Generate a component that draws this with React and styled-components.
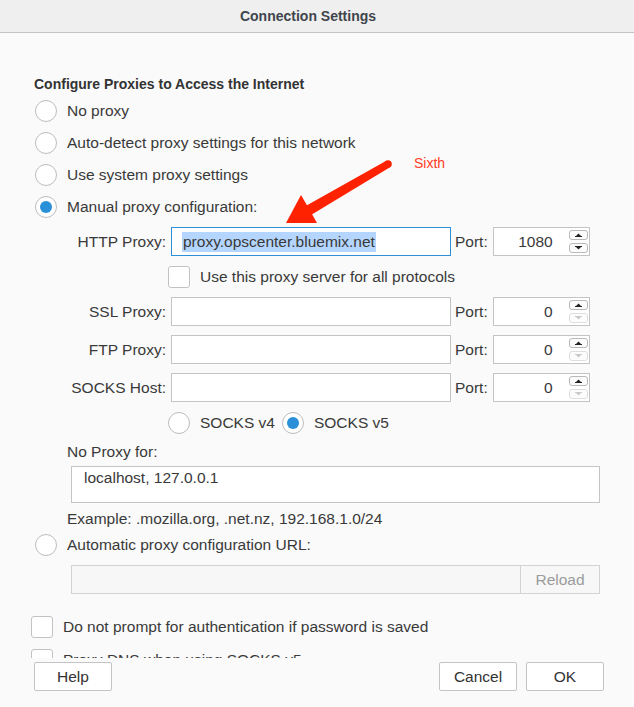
import React from "react";
import styled, { createGlobalStyle } from "styled-components";

const GlobalStyle = createGlobalStyle`
  body {
    margin: 0;
    background: #fafafa;
    font-family: "Liberation Sans", Arial, sans-serif;
    color: #393939;
  }
`;

const Window = styled.div`
  position: relative;
  width: 634px;
  height: 707px;
  display: flex;
  flex-direction: column;
  overflow: hidden;
  background: #fafafa;
`;

const TitleBar = styled.div`
  flex: none;
  height: 33px;
  box-sizing: border-box;
  display: flex;
  align-items: center;
  justify-content: center;
  padding-right: 18px;
  background: #efefef;
  border-bottom: 1px solid #c3c3c3;
  font-size: 14px;
  font-weight: bold;
  color: #3f454d;
`;

const Content = styled.div`
  flex: 1;
  min-height: 0;
  overflow: hidden;
  box-sizing: border-box;
  padding: 41px 0 0 35px;
  font-size: 15.5px;
`;

const Heading = styled.div`
  margin-left: -1px;
  margin-bottom: 1px;
  line-height: 20px;
  font-size: 14px;
  font-weight: bold;
  color: #333;
`;

const OptionRow = styled.div`
  display: flex;
  align-items: center;
  gap: 10px;
  height: ${(p) => p.$h || 32}px;
  margin-top: ${(p) => p.$mt || 0}px;
  margin-left: ${(p) => p.$ml || 0}px;
  white-space: nowrap;
`;

const Radio = styled.span`
  flex: none;
  width: 22px;
  height: 22px;
  box-sizing: border-box;
  border: 1px solid #bdbdbd;
  border-radius: 50%;
  background: #fff;
  display: flex;
  align-items: center;
  justify-content: center;
  &::after {
    content: "";
    display: ${(p) => (p.$checked ? "block" : "none")};
    width: 12px;
    height: 12px;
    border-radius: 50%;
    background: #2a90d9;
  }
`;

const Checkbox = styled.span`
  flex: none;
  width: 22px;
  height: 22px;
  box-sizing: border-box;
  border: 1px solid #c2c2c2;
  border-radius: 3px;
  background: #fff;
`;

const FieldRow = styled.div`
  display: grid;
  grid-template-columns: 132px 280px max-content 97px;
  justify-content: start;
  column-gap: 4px;
  align-items: center;
  height: 29px;
  margin-top: ${(p) => p.$mt || 0}px;
`;

const FieldLabel = styled.label`
  text-align: right;
  padding-right: 1px;
  white-space: nowrap;
`;

const TextBox = styled.div`
  height: 29px;
  box-sizing: border-box;
  border: 1px solid ${(p) => (p.$focused ? "#2f8fd6" : "#c4c4c4")};
  background: #fff;
  display: flex;
  align-items: center;
  padding-left: 11px;
  white-space: nowrap;
`;

const Selected = styled.span`
  background: #b4d5fd;
  line-height: 20px;
  padding: 0 1px;
  margin-left: -1px;
`;

const PortBox = styled.div`
  height: 29px;
  box-sizing: border-box;
  border: 1px solid #c4c4c4;
  background: #fff;
  display: flex;
  align-items: center;
  justify-content: flex-end;
  padding-right: 1px;
`;

const PortValue = styled.span`
  margin-right: 16px;
`;

const Spinner = styled.div`
  display: flex;
  flex-direction: column;
  gap: 3px;
`;

const SpinButton = styled.span`
  width: 19px;
  height: 10px;
  box-sizing: border-box;
  border: 1px solid ${(p) => (p.$disabled ? "#dedede" : "#b9b9b9")};
  border-radius: 3px;
  background: #fcfcfc;
  display: flex;
  align-items: center;
  justify-content: center;
  color: ${(p) => (p.$disabled ? "#c9c9c9" : "#222")};
`;

const CheckRow = styled.div`
  grid-column: 2 / 5;
  display: flex;
  align-items: center;
  gap: 10px;
  margin-left: -3px;
  white-space: nowrap;
`;

const SocksRow = styled.div`
  display: flex;
  align-items: center;
  height: 29px;
  margin: 6px 0 0 133px;
`;

const SocksOption = styled.div`
  display: flex;
  align-items: center;
  gap: 10px;
  margin-right: 7px;
  white-space: nowrap;
`;

const Section = styled.div`
  margin-left: 32px;
`;

const TextLine = styled.div`
  line-height: 20px;
  margin-top: ${(p) => p.$mt || 0}px;
  white-space: nowrap;
`;

const TextArea = styled.div`
  width: 529px;
  height: 37px;
  box-sizing: border-box;
  margin: 4px 0 0 4px;
  border: 1px solid #c4c4c4;
  background: #fff;
  padding: 1px 0 0 12px;
  line-height: 20px;
`;

const UrlBox = styled.div`
  display: flex;
  width: 529px;
  height: 29px;
  box-sizing: border-box;
  margin: 4px 0 0 36px;
  border: 1px solid #d3d3d3;
  background: #f7f7f7;
`;

const UrlInput = styled.div`
  flex: 1;
  border-right: 1px solid #d3d3d3;
`;

const ReloadButton = styled.div`
  width: 78px;
  display: flex;
  align-items: center;
  justify-content: center;
  color: #9b9b9b;
`;

const Footer = styled.div`
  flex: none;
  height: 49px;
  box-sizing: border-box;
  padding: 4px 30px 0 34px;
  display: flex;
  align-items: flex-start;
  gap: 9px;
  background: #fafafa;
`;

const Button = styled.button`
  width: 78px;
  height: 29px;
  box-sizing: border-box;
  border: 1px solid #c4c4c4;
  border-radius: 2px;
  background: #fff;
  font-family: inherit;
  font-size: 15.5px;
  color: #333;
  padding: 0;
  &:first-child {
    margin-right: auto;
  }
`;

const Annotation = styled.svg`
  position: absolute;
  left: 0;
  top: 0;
  width: 634px;
  height: 707px;
  pointer-events: none;
`;

const Note = styled.span`
  position: absolute;
  left: 414px;
  top: 154px;
  font-size: 14px;
  line-height: 18px;
  color: #ff3d24;
`;

function Spin({ downDisabled }) {
  return (
    <Spinner>
      <SpinButton>
        <svg width="9" height="6" viewBox="0 0 9 6">
          <polygon points="2,4 4.5,1.5 7,4" fill="currentColor" />
          <line x1="1" y1="4.5" x2="8" y2="4.5" stroke="currentColor" strokeWidth="1" />
        </svg>
      </SpinButton>
      <SpinButton $disabled={downDisabled}>
        <svg width="9" height="6" viewBox="0 0 9 6">
          <line x1="1" y1="1.5" x2="8" y2="1.5" stroke="currentColor" strokeWidth="1" />
          <polygon points="2,2 4.5,4.5 7,2" fill="currentColor" />
        </svg>
      </SpinButton>
    </Spinner>
  );
}

function ProxyField({ label, value, port, focused, mt }) {
  return (
    <FieldRow $mt={mt}>
      <FieldLabel>{label}</FieldLabel>
      <TextBox $focused={focused}>{value && <Selected>{value}</Selected>}</TextBox>
      <FieldLabel>Port:</FieldLabel>
      <PortBox>
        <PortValue>{port}</PortValue>
        <Spin downDisabled={port === "0"} />
      </PortBox>
    </FieldRow>
  );
}

export default function App() {
  return (
    <Window>
      <GlobalStyle />
      <TitleBar>Connection Settings</TitleBar>
      <Content>
        <Heading>Configure Proxies to Access the Internet</Heading>
        <OptionRow>
          <Radio />
          No proxy
        </OptionRow>
        <OptionRow>
          <Radio />
          Auto-detect proxy settings for this network
        </OptionRow>
        <OptionRow>
          <Radio />
          Use system proxy settings
        </OptionRow>
        <OptionRow>
          <Radio $checked />
          Manual proxy configuration:
        </OptionRow>

        <ProxyField label="HTTP Proxy:" value="proxy.opscenter.bluemix.net" port="1080" focused mt={4} />
        <FieldRow $mt={6}>
          <CheckRow>
            <Checkbox />
            Use this proxy server for all protocols
          </CheckRow>
        </FieldRow>
        <ProxyField label="SSL Proxy:" port="0" mt={6} />
        <ProxyField label="FTP Proxy:" port="0" mt={9} />
        <ProxyField label="SOCKS Host:" port="0" mt={9} />

        <SocksRow>
          <SocksOption>
            <Radio />
            SOCKS v4
          </SocksOption>
          <SocksOption>
            <Radio $checked />
            SOCKS v5
          </SocksOption>
        </SocksRow>

        <Section>
          <TextLine $mt={5}>No Proxy for:</TextLine>
          <TextArea>localhost, 127.0.0.1</TextArea>
          <TextLine $mt={6}>Example: .mozilla.org, .net.nz, 192.168.1.0/24</TextLine>
        </Section>

        <OptionRow>
          <Radio />
          Automatic proxy configuration URL:
        </OptionRow>
        <UrlBox>
          <UrlInput />
          <ReloadButton>Reload</ReloadButton>
        </UrlBox>

        <OptionRow $h={29} $mt={18} $ml={-4}>
          <Checkbox />
          Do not prompt for authentication if password is saved
        </OptionRow>
        <OptionRow $h={29} $mt={4} $ml={-4}>
          <Checkbox />
          Proxy DNS when using SOCKS v5
        </OptionRow>
      </Content>
      <Footer>
        <Button>Help</Button>
        <Button>Cancel</Button>
        <Button>OK</Button>
      </Footer>

      <Annotation viewBox="0 0 634 707">
        <circle cx="388" cy="164" r="3.8" fill="#ff2200" />
        <polygon points="390,167.3 386.3,160.7 303,207.5 308.5,216.5" fill="#ff2200" />
        <polygon points="286,223 301,195 308,207 317,223" fill="#ff2200" />
      </Annotation>
      <Note>Sixth</Note>
    </Window>
  );
}
